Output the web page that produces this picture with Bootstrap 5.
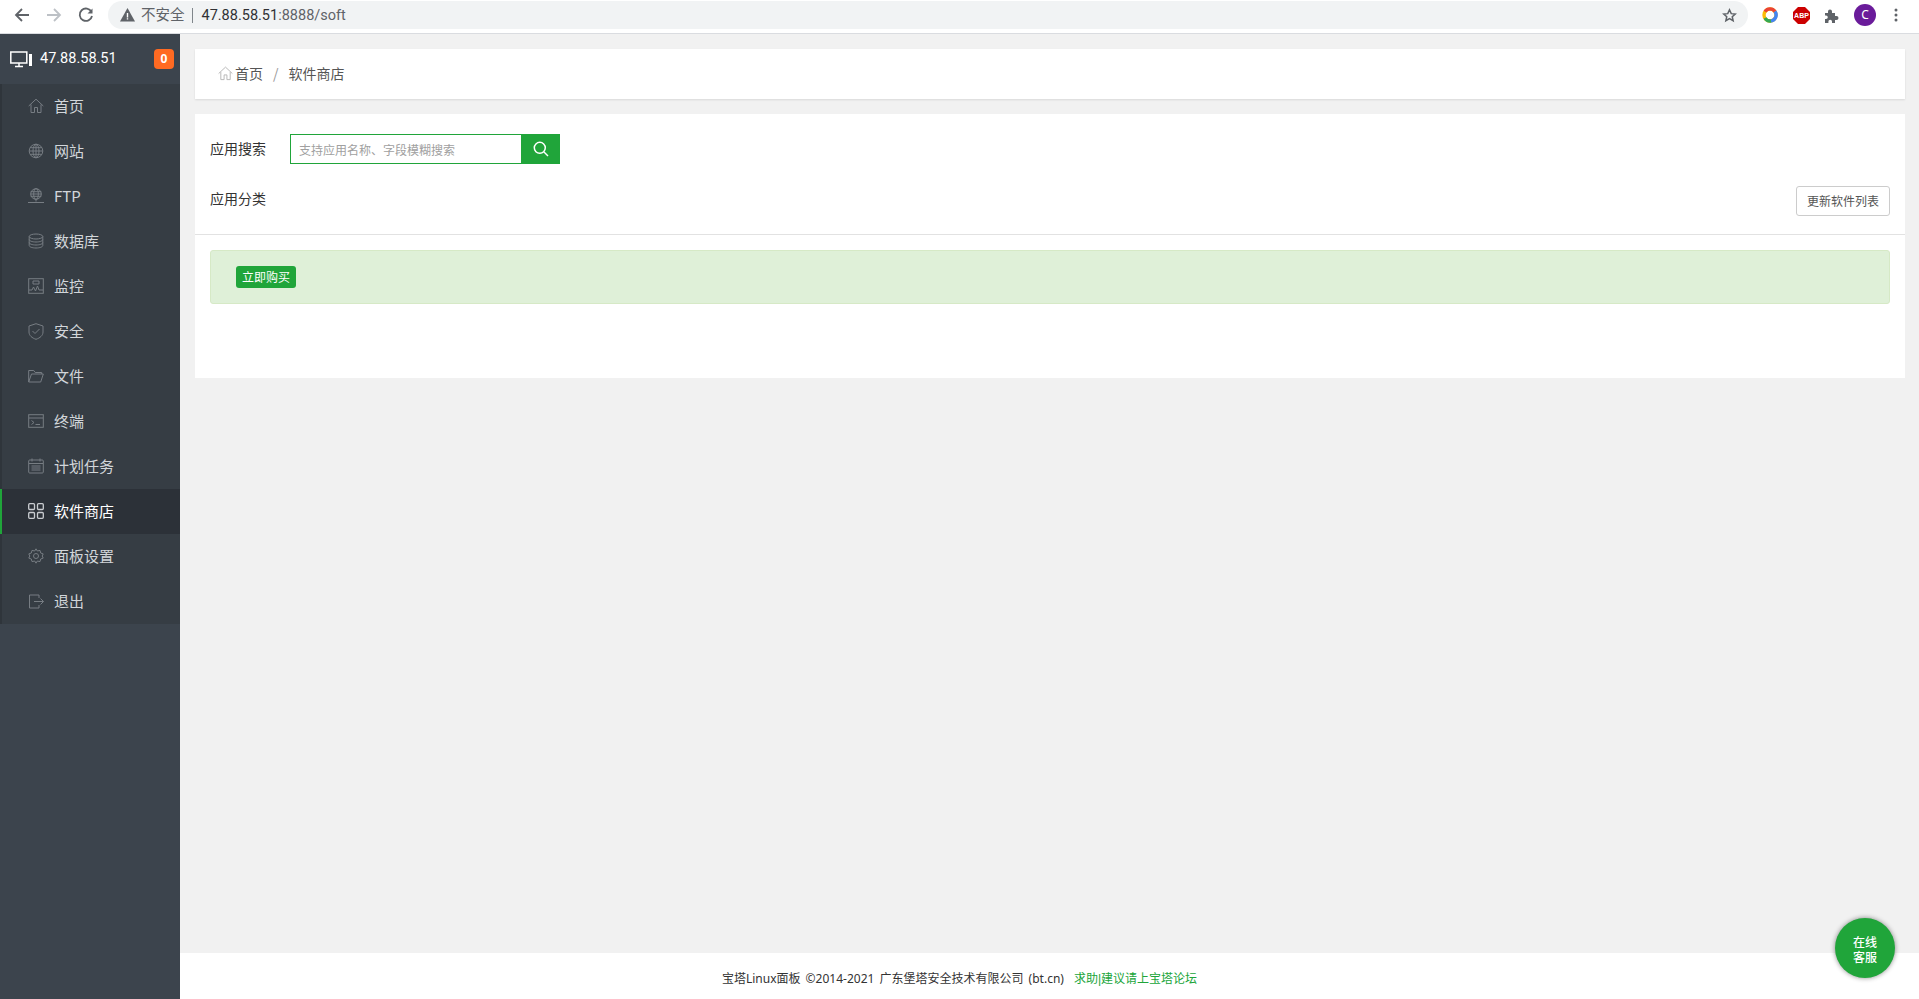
<!DOCTYPE html>
<html lang="zh-CN">
<head>
<meta charset="utf-8">
<title>软件商店</title>
<link rel="stylesheet" href="https://cdn.jsdelivr.net/npm/bootstrap@5.3.0/dist/css/bootstrap.min.css">
<style>
html,body{height:100%;}
body{font-family:"Noto Sans","Noto Sans CJK SC",sans-serif;background:#f1f1f1;color:#333;font-size:12px;overflow:hidden;}
.chrome-bar{height:34px;background:#fff;border-bottom:1px solid #dadce0;padding:0 13px 3px 14px;flex:none;}
.chrome-nav{width:32px;}
.addr{width:1640px;height:28px;margin-left:-2px;background:#f1f3f4;border-radius:14px;padding-left:12px;padding-right:11px;font-size:14.5px;font-family:"Roboto","Noto Sans CJK SC",sans-serif;color:#5f6368;flex:none;}
.addr-warn{margin-right:6px;}
.addr-text{padding-top:2px;}
.addr-sep{width:1px;height:15px;background:#80868b;margin:0 9px 0 7px;}
.addr-host{color:#303134;}
.ext-row{margin-left:14px;}
.ext-slot{width:31px;}
.ext-slot-last{width:30px;}
.avatar{width:22px;height:22px;border-radius:50%;background:#6a1b9a;color:#fff;font-size:12px;}
.menu-dots{margin-left:18px;}
.side{width:180px;background:#3c444d;flex:none;}
.side-head{height:50px;color:#fff;font-size:14px;padding:0 6px 0 10px;}
.side-ip{margin-left:7px;font-family:"Roboto",sans-serif;font-size:14.5px;}
.side-count{width:20px;height:20px;border-radius:4px;background:#ff6a22;font-size:12px;font-weight:700;}
.side-menu{background:#363d44;border-left:2px solid #2f353b;}
.side-item{height:45px;padding:0 0 1px 26px;color:#d2d6da;font-size:15px;text-decoration:none;font-family:"Noto Sans CJK SC",sans-serif;margin-left:-2px;border-left:2px solid transparent;}
.side-item svg{margin-right:10px;flex:none;color:#777d83;}
.side-item.is-on{background:#2c3138;color:#fff;border-left-color:#20a53a;}
.side-item.is-on svg{color:#c9ccd0;}
.work{min-width:0;}
.work-inner{padding:15px 14px 0 15px;}
.crumb-box{height:50px;background:#fff;box-shadow:0 1px 2px rgba(0,0,0,.1);padding:0 0 2px 23px;font-size:14px;font-family:"Noto Sans CJK SC",sans-serif;color:#555;}
.crumb-box svg{color:#b5b5b5;margin-right:2px;}
.crumb-sep{margin:0 10px;color:#999;}
.soft-box{height:264px;margin-top:15px;background:#fff;}
.soft-top{height:121px;padding:20px 15px 0;border-bottom:1px solid #e2e2e2;font-family:"Noto Sans CJK SC",sans-serif;font-size:14px;}
.soft-label{width:80px;color:#333;padding-bottom:2px;}
.soft-input{width:231px;height:30px;border:1px solid #20a53a;border-right:0;padding:0 8px;font-size:12px;outline:0;border-radius:0;font-family:"Noto Sans CJK SC",sans-serif;}
.soft-input::placeholder{color:#a0a0a0;}
.soft-go{width:39px;height:30px;background:#20a53a;border:0;padding:0;border-radius:0;}
.soft-row2{margin-top:22px;}
.soft-row2 .soft-label{padding-top:2px;}
.refresh{height:30px;width:94px;padding:0;font-size:12px;line-height:28px;border:1px solid #ccc;border-radius:3px;background:#fff;color:#555;}
.buy-bar{height:54px;margin:15px 15px 0;background:#dff0d8;border:1px solid #d6e9c6;border-radius:3px;padding-left:25px;}
.buy-tag{height:22px;width:60px;background:#20a53a;color:#fff;border-radius:3px;font-size:12px;font-family:"Noto Sans CJK SC",sans-serif;}
.foot{height:46px;background:#fff;font-size:12px;color:#333;font-family:"Noto Sans","Noto Sans CJK SC",sans-serif;padding:5px 180px 0 0;word-spacing:2px;}
.foot a{color:#20a53a;text-decoration:none;margin-left:10px;font-family:"Liberation Sans","Noto Sans CJK SC",sans-serif;}
.chat{position:absolute;right:24px;bottom:21px;width:60px;height:60px;padding-top:2px;border-radius:50%;background:#20a53a;color:#fff;font-size:12px;line-height:15px;font-weight:500;box-shadow:0 0 5px rgba(0,0,0,.45);text-align:center;font-family:"Noto Sans CJK SC",sans-serif;}
</style>
</head>
<body class="d-flex flex-column">
<div class="chrome-bar d-flex align-items-center">
  <div class="chrome-nav d-flex"><svg width="16" height="16" viewBox="0 0 16 16" fill="none" stroke="#5f6368" stroke-width="1.8"><path d="M15 8H2M8 2 2 8l6 6"/></svg></div>
  <div class="chrome-nav d-flex"><svg width="16" height="16" viewBox="0 0 16 16" fill="none" stroke="#bdc1c6" stroke-width="1.8"><path d="M1 8h13M8 2l6 6-6 6"/></svg></div>
  <div class="chrome-nav d-flex"><svg width="16" height="16" viewBox="0 0 16 16" fill="none" stroke="#5f6368" stroke-width="1.8"><path d="M13.5 5A6.2 6.2 0 1 0 14 9"/><path d="M14.5 1.5v5h-5" fill="#5f6368" stroke="none"/></svg></div>
  <div class="addr d-flex align-items-center">
    <svg class="addr-warn" width="15" height="14" viewBox="0 0 15 14"><path d="M7.5 0 15 13.5H0z" fill="#5f6368"/><path d="M6.8 5h1.4v4.5H6.8zM6.8 10.2h1.4v1.4H6.8z" fill="#fff"/></svg>
    <span class="addr-text">不安全</span><span class="addr-sep"></span><span class="addr-text"><span class="addr-host">47.88.58.51</span>:8888/soft</span>
    <svg class="ms-auto" width="15" height="15" viewBox="0 0 24 24" fill="none" stroke="#5f6368" stroke-width="2.4"><path d="m12 3 2.8 6 6.4.7-4.8 4.3 1.4 6.4L12 17l-5.8 3.4L7.6 14 2.8 9.700l6.400-.7z"/></svg>
  </div>
  <div class="ext-row d-flex align-items-center">
    <div class="ext-slot d-flex"><svg width="16" height="16" viewBox="0 0 16 16" fill="none" stroke-width="3.4"><circle cx="8" cy="8" r="6" stroke="#fbbc04"/><path d="M3 4.600A6 6 0 0 1 13 4.600" stroke="#ea4335"/><path d="M13 4.600A6 6 0 0 1 9 14" stroke="#4285f4"/><path d="M9 14A6 6 0 0 1 3 11" stroke="#34a853"/></svg></div>
    <div class="ext-slot d-flex"><svg width="17" height="17" viewBox="0 0 17 17"><path d="M5 0h7l5 5v7l-5 5H5l-5-5V5z" fill="#cc0000"/><text x="8.500" y="11" font-size="7" font-weight="700" fill="#fff" text-anchor="middle" font-family="Liberation Sans">ABP</text></svg></div>
    <div class="ext-slot-last d-flex"><svg width="15" height="15" viewBox="0 0 15 15"><path d="M1 5h3V3.500a2 2 0 0 1 4 0V5h3v3h1.500a2 2 0 0 1 0 4H11v3H8v-1.500a1.800 1.800 0 0 0-3.600 0V15H1v-4h1a1.800 1.800 0 0 0 0-3.600H1z" fill="#5f6368"/></svg></div>
    <div class="avatar d-flex align-items-center justify-content-center">C</div>
    <svg class="menu-dots" width="4" height="14" viewBox="0 0 4 14" fill="#5f6368"><circle cx="2" cy="2" r="1.500"/><circle cx="2" cy="7" r="1.500"/><circle cx="2" cy="12" r="1.500"/></svg>
  </div>
</div>
<div class="d-flex flex-grow-1 position-relative" style="min-height:0">
  <aside class="side">
    <div class="side-head d-flex align-items-center">
      <svg width="23" height="17" viewBox="0 0 23 17" fill="none" stroke="#fff" stroke-width="1.500"><rect x=".8" y="1" width="16" height="11"/><path d="M5 15.500h8M9 12v3"/><rect x="19" y="3" width="3" height="12" fill="#fff" stroke="none"/></svg>
      <span class="side-ip">47.88.58.51</span>
      <span class="side-count ms-auto d-flex align-items-center justify-content-center">0</span>
    </div>
    <nav class="side-menu">
      <a class="side-item d-flex align-items-center" href="#"><svg width="16" height="16" viewBox="0 0 16 16" fill="none" stroke="currentColor"><path d="M.7 8 8 1.200 15.300 8M3 6.500v8h3.500v-5h3v5H13v-8"/></svg>首页</a>
      <a class="side-item d-flex align-items-center" href="#"><svg width="16" height="16" viewBox="0 0 16 16" fill="none" stroke="currentColor"><circle cx="8" cy="8" r="6.800"/><ellipse cx="8" cy="8" rx="3" ry="6.800"/><path d="M8 1v14M1.300 8h13.400M2.200 4.700h11.600M2.200 11.300h11.600"/></svg>网站</a>
      <a class="side-item d-flex align-items-center" href="#"><svg width="16" height="16" viewBox="0 0 16 16" fill="none" stroke="currentColor"><circle cx="8" cy="6" r="5.300"/><ellipse cx="8" cy="6" rx="2.300" ry="5.300"/><path d="M2.700 6h10.600M2.700 3.700h10.600M2.700 8.300h10.600M8 11.500v2M0 14.500h16"/></svg>FTP</a>
      <a class="side-item d-flex align-items-center" href="#"><svg width="16" height="16" viewBox="0 0 16 16" fill="none" stroke="currentColor"><ellipse cx="8" cy="3.500" rx="6.800" ry="2.500"/><path d="M1.200 3.500v9c0 1.400 3 2.500 6.800 2.500s6.800-1.100 6.800-2.500v-9M1.200 6.500c0 1.400 3 2.500 6.800 2.500s6.800-1.100 6.800-2.500M1.200 9.500c0 1.400 3 2.500 6.800 2.500s6.800-1.100 6.800-2.500"/></svg>数据库</a>
      <a class="side-item d-flex align-items-center" href="#"><svg width="16" height="16" viewBox="0 0 16 16" fill="none" stroke="currentColor"><rect x=".7" y=".7" width="14.600" height="14.600"/><path d="M1 12h3l1.500-3 2 4 2-5 1.500 4h4M5 3h6v3H5z"/></svg>监控</a>
      <a class="side-item d-flex align-items-center" href="#"><svg width="16" height="17" viewBox="0 0 16 17" fill="none" stroke="currentColor"><path d="M8 .7 15 3v6c0 3.500-3 6-7 7.300C4 15 1 12.500 1 9V3z"/><path d="m4.500 8 2.500 2.500L11.500 6"/></svg>安全</a>
      <a class="side-item d-flex align-items-center" href="#"><svg width="16" height="14" viewBox="0 0 16 14" fill="none" stroke="currentColor"><path d="M.7 13V1.500h5l1.500 2h6.500V5M.7 13h12l2.600-8H3.500z"/></svg>文件</a>
      <a class="side-item d-flex align-items-center" href="#"><svg width="16" height="14" viewBox="0 0 16 14" fill="none" stroke="currentColor"><rect x=".7" y=".7" width="14.600" height="12.600"/><path d="M1 4h14M3.500 6.500 6 8.500l-2.500 2M7.500 10.500H12"/></svg>终端</a>
      <a class="side-item d-flex align-items-center" href="#"><svg width="16" height="16" viewBox="0 0 16 16" fill="none" stroke="currentColor"><rect x=".7" y="2" width="14.600" height="13" rx="1"/><path d="M4 .5v3M12 .5v3M1 5.500h14M3.500 8h9M3.500 10h9M3.500 12h9" /></svg>计划任务</a>
      <a class="side-item is-on d-flex align-items-center" href="#"><svg width="16" height="16" viewBox="0 0 16 16" fill="none" stroke="currentColor" stroke-width="1.300"><rect x=".7" y=".7" width="5.800" height="5.800" rx="1"/><rect x="9.500" y=".7" width="5.800" height="5.800" rx="1"/><rect x=".7" y="9.500" width="5.800" height="5.800" rx="1"/><rect x="9.500" y="9.500" width="5.800" height="5.800" rx="1"/></svg>软件商店</a>
      <a class="side-item d-flex align-items-center" href="#"><svg width="16" height="16" viewBox="0 0 16 16" fill="none" stroke="currentColor"><circle cx="8" cy="8" r="2.500"/><path d="M8 .8 9.300 3 12 2.400l.7 2.600 2.500.9-1 2.100 1 2.100-2.500.9-.7 2.600L9.300 13 8 15.200 6.700 13 4 13.600 3.300 11l-2.500-.9 1-2.100-1-2.100 2.500-.9L4 2.400 6.700 3z"/></svg>面板设置</a>
      <a class="side-item d-flex align-items-center" href="#"><svg width="16" height="15" viewBox="0 0 16 15" fill="none" stroke="currentColor"><path d="M11 4V1H1.500v13H11v-3M6 7.500h9.500M12.500 4.500l3 3-3 3"/></svg>退出</a>
    </nav>
  </aside>
  <main class="work flex-grow-1 d-flex flex-column">
    <div class="work-inner flex-grow-1">
      <div class="crumb-box d-flex align-items-center">
        <svg width="15" height="15" viewBox="0 0 16 16" fill="none" stroke="currentColor"><path d="M.7 8 8 1.200 15.300 8M3 6.500v8h3.500v-5h3v5H13v-8"/></svg>
        <span>首页</span><span class="crumb-sep">/</span><span>软件商店</span>
      </div>
      <section class="soft-box">
        <div class="soft-top">
          <div class="d-flex align-items-center">
            <span class="soft-label">应用搜索</span>
            <input class="soft-input" type="text" placeholder="支持应用名称、字段模糊搜索">
            <button class="soft-go btn d-flex align-items-center justify-content-center" type="button" aria-label="搜索"><svg width="16" height="16" viewBox="0 0 16 16" fill="none" stroke="#fff" stroke-width="1.500"><circle cx="6.800" cy="6.800" r="5.500"/><path d="m11 11 4 4"/></svg></button>
          </div>
          <div class="soft-row2 d-flex justify-content-between align-items-start">
            <span class="soft-label">应用分类</span>
            <button class="refresh btn" type="button">更新软件列表</button>
          </div>
        </div>
        <div class="buy-bar d-flex align-items-center">
          <span class="buy-tag d-flex align-items-center justify-content-center">立即购买</span>
        </div>
      </section>
    </div>
    <footer class="foot d-flex align-items-center justify-content-center">
      <span>宝塔Linux面板 ©2014-2021 广东堡塔安全技术有限公司 (bt.cn)</span><a href="#">求助|建议请上宝塔论坛</a>
    </footer>
  </main>
  <div class="chat d-flex align-items-center justify-content-center">在线<br>客服</div>
</div>
</body>
</html>
